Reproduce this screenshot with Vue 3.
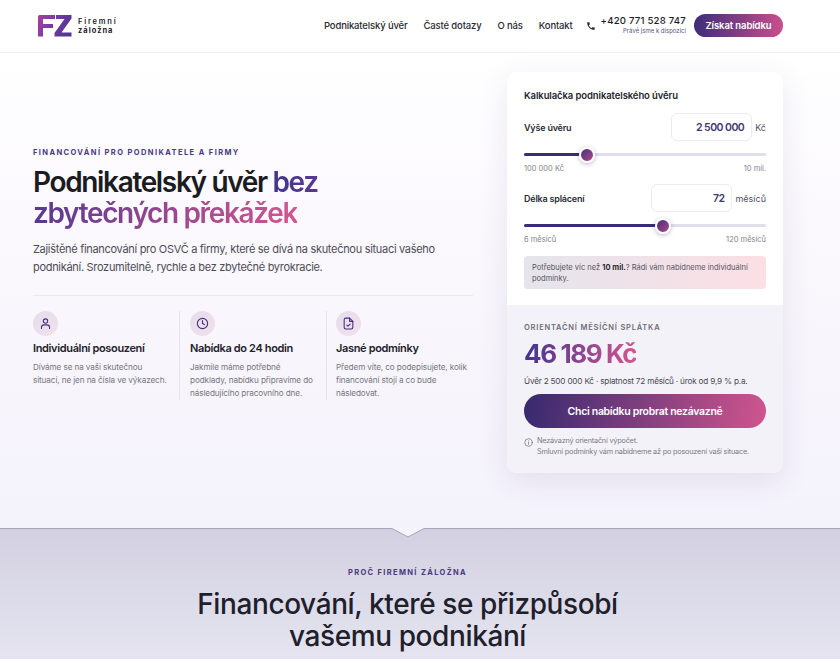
<script setup>
import { computed } from 'vue'

const amount = 2500000
const months = 72
const payment = 46189

const amountRatio = computed(() => (amount - 100000) / (10000000 - 100000))
const monthsRatio = computed(() => (months - 6) / (120 - 6))

// same thumb travel as a native range input with a 16px thumb
function thumbPosition(ratio) {
  return `calc(8px + (100% - 16px) * ${ratio})`
}

function formatNumber(value) {
  return String(value).replace(/\B(?=(\d{3})+(?!\d))/g, ' ')
}

const navLinks = ['Podnikatelský úvěr', 'Časté dotazy', 'O nás', 'Kontakt']

const features = [
  {
    icon: 'user',
    title: 'Individuální posouzení',
    text: 'Díváme se na vaši skutečnou situaci, ne jen na čísla ve výkazech.',
  },
  {
    icon: 'clock',
    title: 'Nabídka do 24 hodin',
    text: 'Jakmile máme potřebné podklady, nabídku připravíme do následujícího pracovního dne.',
  },
  {
    icon: 'file',
    title: 'Jasné podmínky',
    text: 'Předem víte, co podepisujete, kolik financování stojí a co bude následovat.',
  },
]
</script>

<template>
  <div class="page">
    <header class="header">
      <div class="header-inner">
        <a class="logo">
          <svg class="logo-mark" width="34" height="22" viewBox="0 0 34 22">
            <defs>
              <linearGradient id="logoGrad" x1="0" y1="0" x2="1" y2="0.300">
                <stop offset="0" stop-color="#a8409e" />
                <stop offset="0.500" stop-color="#7a3aa0" />
                <stop offset="1" stop-color="#54359a" />
              </linearGradient>
            </defs>
            <path
              fill="url(#logoGrad)"
              d="M0 1.500Q0 0 1.500 0H17V4H5V9H15V13H5V21.500H0ZM18 0H33.500V3.500L23.500 17.500H33.500V21.500H16.500V18L26.500 4H18Z"
            />
          </svg>
          <span class="logo-text">
            <span class="logo-top">Firemní</span>
            <span class="logo-bottom">záložna</span>
          </span>
        </a>
        <nav class="nav">
          <a v-for="link in navLinks" :key="link">{{ link }}</a>
        </nav>
        <div class="phone">
          <svg width="10" height="10" viewBox="0 0 24 24" fill="#26262e">
            <path d="M6.600 10.800c1.400 2.800 3.800 5.100 6.600 6.600l2.200-2.200c.3-.3.700-.4 1-.2 1.100.4 2.300.6 3.600.6.600 0 1 .4 1 1V20c0 .6-.4 1-1 1C10.600 21 3 13.400 3 4c0-.6.400-1 1-1h3.500c.6 0 1 .4 1 1 0 1.300.2 2.500.6 3.600.1.300 0 .7-.2 1z" />
          </svg>
          <div class="phone-text">
            <span class="phone-number">+420 771 528 747</span>
            <span class="phone-note">Právě jsme k dispozici</span>
          </div>
        </div>
        <button class="header-cta" type="button">Získat nabídku</button>
      </div>
    </header>

    <section class="hero">
      <div class="hero-inner">
        <div class="hero-left">
          <p class="eyebrow">Financování pro podnikatele a firmy</p>
          <h1 class="hero-title">
            Podnikatelský úvěr <span class="gradient-text">bez<br />zbytečných překážek</span>
          </h1>
          <p class="hero-lead">
            Zajištěné financování pro OSVČ a firmy, které se dívá na skutečnou situaci vašeho
            podnikání. Srozumitelně, rychle a bez zbytečné byrokracie.
          </p>
          <div class="features">
            <div v-for="feature in features" :key="feature.title" class="feature">
              <span class="feature-icon">
                <svg
                  width="13"
                  height="13"
                  viewBox="0 0 24 24"
                  fill="none"
                  stroke="#4a2f7f"
                  stroke-width="2"
                  stroke-linecap="round"
                  stroke-linejoin="round"
                >
                  <template v-if="feature.icon === 'user'">
                    <circle cx="12" cy="7.500" r="4" />
                    <path d="M4.500 21v-1.500a5 5 0 0 1 5-5h5a5 5 0 0 1 5 5V21" />
                  </template>
                  <template v-else-if="feature.icon === 'clock'">
                    <circle cx="12" cy="12" r="9.500" />
                    <path d="M12 6.500V12l3.500 2" />
                  </template>
                  <template v-else>
                    <path d="M14 2H7a3 3 0 0 0-3 3v14a3 3 0 0 0 3 3h10a3 3 0 0 0 3-3V8z" />
                    <path d="M14 2v6h6" />
                    <path d="M9 15l2 2 4-4" />
                  </template>
                </svg>
              </span>
              <h3 class="feature-title">{{ feature.title }}</h3>
              <p class="feature-text">{{ feature.text }}</p>
            </div>
          </div>
        </div>

        <aside class="card">
          <div class="card-top">
            <h2 class="card-title">Kalkulačka podnikatelského úvěru</h2>

            <div class="field-row">
              <label class="field-label">Výše úvěru</label>
              <div class="field-value">
                <span class="value-box">{{ formatNumber(amount) }}</span>
                <span class="unit">Kč</span>
              </div>
            </div>
            <div class="slider">
              <div class="slider-fill" :style="{ width: thumbPosition(amountRatio) }"></div>
              <span class="slider-thumb" :style="{ left: thumbPosition(amountRatio) }"></span>
            </div>
            <div class="slider-labels">
              <span>100 000 Kč</span>
              <span>10 mil.</span>
            </div>

            <div class="field-row field-row-second">
              <label class="field-label">Délka splácení</label>
              <div class="field-value">
                <span class="value-box">{{ months }}</span>
                <span class="unit">měsíců</span>
              </div>
            </div>
            <div class="slider">
              <div class="slider-fill" :style="{ width: thumbPosition(monthsRatio) }"></div>
              <span class="slider-thumb" :style="{ left: thumbPosition(monthsRatio) }"></span>
            </div>
            <div class="slider-labels">
              <span>6 měsíců</span>
              <span>120 měsíců</span>
            </div>

            <p class="notice">
              Potřebujete víc než <strong>10 mil.</strong>? Rádi vám nabídneme individuální
              podmínky.
            </p>
          </div>

          <div class="card-bottom">
            <p class="result-label">Orientační měsíční splátka</p>
            <p class="result-value"><span>{{ formatNumber(payment) }} Kč</span></p>
            <p class="result-summary">
              Úvěr {{ formatNumber(amount) }} Kč · splatnost {{ months }} měsíců · úrok od 9,9 % p.a.
            </p>
            <button class="card-cta" type="button">Chci nabídku probrat nezávazně</button>
            <div class="disclaimer">
              <svg
                width="9"
                height="9"
                viewBox="0 0 24 24"
                fill="none"
                stroke="#77757f"
                stroke-width="2"
                stroke-linecap="round"
              >
                <circle cx="12" cy="12" r="10" />
                <path d="M12 11v6M12 7.500v.1" />
              </svg>
              <p>
                Nezávazný orientační výpočet.<br />
                Smluvní podmínky vám nabídneme až po posouzení vaší situace.
              </p>
            </div>
          </div>
        </aside>
      </div>
    </section>

    <section class="why">
      <svg class="why-notch" width="34" height="10" viewBox="0 0 34 10">
        <path d="M0 0L17 9L34 0Z" fill="#f5f3fb" />
        <path d="M0 0L17 9L34 0" fill="none" stroke="#a6a3bd" />
      </svg>
      <p class="why-eyebrow">Proč Firemní záložna</p>
      <h2 class="why-title">Financování, které se přizpůsobí<br />vašemu podnikání</h2>
    </section>
  </div>
</template>

<style>
html,
body {
  margin: 0;
  background: #fff;
}
</style>

<style scoped>
.page {
  height: 659px;
  overflow: hidden;
  font-family: Inter, 'Noto Sans', sans-serif;
  color: #1d1d26;
}

p,
h1,
h2,
h3 {
  margin: 0;
}

.header {
  height: 52px;
  border-bottom: 1px solid #f0eff3;
  background: #fff;
}

.header-inner {
  width: 750px;
  height: 51px;
  margin-left: 33px;
  display: flex;
  align-items: center;
}

.logo {
  display: flex;
  align-items: center;
  gap: 6px;
  margin-left: 5px;
}

.logo-text {
  display: flex;
  flex-direction: column;
  font-size: 7.500px;
  font-weight: 600;
  line-height: 9px;
  color: #23232b;
}

.logo-top {
  letter-spacing: 1.800px;
}

.logo-bottom {
  letter-spacing: 1px;
  font-weight: 700;
}

.nav {
  display: flex;
  gap: 16px;
  margin-left: auto;
  font-size: 9.500px;
  font-weight: 500;
  letter-spacing: -0.150px;
  color: #2a2a33;
}

.phone {
  display: flex;
  align-items: center;
  gap: 5px;
  margin-left: 13px;
}

.phone-text {
  display: flex;
  flex-direction: column;
  align-items: flex-end;
  margin-top: -3px;
}

.phone-number {
  font-size: 9.600px;
  font-weight: 500;
  line-height: 13px;
  letter-spacing: 0.200px;
}

.phone-note {
  font-size: 6px;
  line-height: 7px;
  color: #5c5580;
}

.header-cta {
  width: 89px;
  height: 23px;
  margin-left: 8px;
  padding: 0;
  border: none;
  border-radius: 12px;
  background: linear-gradient(90deg, #3d2d78, #c94f8d);
  color: #fff;
  font-family: inherit;
  font-size: 9.500px;
  font-weight: 600;
  letter-spacing: -0.100px;
}

.hero {
  height: 476px;
  background: linear-gradient(180deg, #fff 0%, #faf7fd 45%, #f4f2fb 100%);
  border-bottom: 1px solid #a6a3bd;
  box-sizing: border-box;
}

.hero-inner {
  width: 750px;
  margin-left: 33px;
  padding-top: 19px;
  display: flex;
  justify-content: space-between;
  align-items: flex-start;
}

.hero-left {
  width: 440px;
  padding-top: 76px;
}

.eyebrow {
  font-size: 7.500px;
  font-weight: 700;
  line-height: 10px;
  letter-spacing: 1.400px;
  text-transform: uppercase;
  color: #4b3a80;
}

.hero-title {
  margin-top: 9px;
  font-size: 28px;
  font-weight: 600;
  line-height: 31px;
  letter-spacing: -1.350px;
  color: #1b1b22;
}

.gradient-text {
  background: linear-gradient(90deg, #43348f, #d3568f);
  -webkit-background-clip: text;
  background-clip: text;
  color: transparent;
}

.hero-lead {
  margin-top: 11px;
  font-size: 11px;
  line-height: 18px;
  letter-spacing: -0.300px;
  color: #4d4c56;
}

.features {
  display: flex;
  margin-top: 19px;
  padding-top: 15px;
  border-top: 1px solid #ebe8f0;
}

.feature {
  flex: 1 1 0;
  box-sizing: border-box;
  padding: 0 10px;
  border-left: 1px solid #e7e4ec;
}

.feature:first-child {
  flex: 0 0 146px;
  padding-left: 0;
  border-left: none;
}

.feature:nth-child(2) {
  flex: 0 0 147px;
}

.feature:last-child {
  padding: 0 0 0 9px;
}

.feature-icon {
  width: 25px;
  height: 25px;
  display: flex;
  align-items: center;
  justify-content: center;
  border-radius: 50%;
  background: linear-gradient(135deg, #e4dfec, #f1dfeb);
}

.feature-title {
  margin-top: 5px;
  font-size: 11px;
  font-weight: 600;
  line-height: 15px;
  letter-spacing: -0.350px;
  color: #22222b;
}

.feature-text {
  margin-top: 5px;
  font-size: 8.200px;
  line-height: 13px;
  letter-spacing: -0.120px;
  color: #77757f;
}

.card {
  width: 276px;
  height: 401px;
  border-radius: 10px;
  overflow: hidden;
  background: #fff;
  box-shadow: 0 8px 30px rgba(60, 50, 110, 0.1);
}

.card-top {
  height: 233px;
  box-sizing: border-box;
  padding: 17px 17px 0;
}

.card-title {
  font-size: 9.500px;
  font-weight: 600;
  line-height: 13px;
  letter-spacing: -0.100px;
  color: #25252e;
}

.field-row {
  display: flex;
  align-items: center;
  justify-content: space-between;
  margin-top: 11px;
}

.field-row-second {
  margin-top: 10px;
}

.field-label {
  font-size: 9px;
  font-weight: 600;
  letter-spacing: -0.200px;
  color: #2b2b34;
}

.field-value {
  display: flex;
  align-items: center;
  gap: 3px;
}

.value-box {
  width: 81px;
  height: 28px;
  display: flex;
  align-items: center;
  justify-content: flex-end;
  box-sizing: border-box;
  padding-right: 7px;
  border: 1px solid #edecf1;
  border-radius: 6px;
  background: #fff;
  font-size: 10.500px;
  font-weight: 600;
  letter-spacing: -0.550px;
  color: #42386f;
}

.unit {
  font-size: 9px;
  color: #55535e;
}

.slider {
  position: relative;
  height: 3px;
  margin-top: 12px;
  border-radius: 2px;
  background: #e0deea;
}

.slider-fill {
  height: 100%;
  border-radius: 2px;
  background: #3a2c75;
}

.slider-thumb {
  position: absolute;
  top: 50%;
  width: 12px;
  height: 12px;
  border: 2px solid #fff;
  border-radius: 50%;
  background: linear-gradient(135deg, #44307d, #b04888);
  transform: translate(-50%, -50%);
  box-shadow: 0 1px 4px rgba(50, 40, 100, 0.35);
}

.slider-labels {
  display: flex;
  justify-content: space-between;
  margin-top: 8px;
  font-size: 7.500px;
  line-height: 10px;
  color: #85838d;
}

.notice {
  margin-top: 11px;
  padding: 6px 8px 5px;
  border-radius: 4px;
  background: linear-gradient(90deg, #e5e4ec, #fbdfe4);
  font-size: 7.500px;
  line-height: 11px;
  color: #55535f;
}

.notice strong {
  font-weight: 700;
  color: #2b2b34;
}

.card-bottom {
  height: 168px;
  box-sizing: border-box;
  padding: 18px 17px 0;
  background: #f4f2f9;
}

.result-label {
  font-size: 7.500px;
  font-weight: 600;
  line-height: 10px;
  letter-spacing: 0.800px;
  text-transform: uppercase;
  color: #6d6b78;
}

.result-value {
  margin-top: 6px;
  font-size: 26px;
  font-weight: 700;
  line-height: 30px;
  letter-spacing: -1.400px;
}

.result-value span {
  display: inline-block;
  background: linear-gradient(90deg, #43348f, #d3568f);
  -webkit-background-clip: text;
  background-clip: text;
  color: transparent;
}

.result-summary {
  margin-top: 6px;
  font-size: 8.200px;
  line-height: 12px;
  letter-spacing: -0.200px;
  color: #4a4953;
  white-space: nowrap;
}

.card-cta {
  width: 100%;
  height: 34px;
  margin-top: 7px;
  padding: 0;
  border: none;
  border-radius: 17px;
  background: linear-gradient(100deg, #36296f, #d0558e);
  color: #fff;
  font-family: inherit;
  font-size: 10.500px;
  font-weight: 600;
  letter-spacing: -0.300px;
}

.disclaimer {
  display: flex;
  gap: 4px;
  margin-top: 7px;
  align-items: flex-start;
}

.disclaimer svg {
  flex: none;
  margin-top: 3px;
}

.disclaimer p {
  font-size: 7.300px;
  line-height: 11px;
  letter-spacing: -0.200px;
  color: #7b7985;
  white-space: nowrap;
}

.why {
  position: relative;
  width: 840px;
  height: 131px;
  padding: 39px 25px 0 0;
  box-sizing: border-box;
  text-align: center;
  background: linear-gradient(180deg, #d3d1e1 0%, #e5e4f0 100%);
}

.why-notch {
  position: absolute;
  top: -1px;
  left: 391px;
}

.why-eyebrow {
  font-size: 7.500px;
  font-weight: 700;
  line-height: 10px;
  letter-spacing: 1.350px;
  text-transform: uppercase;
  color: #4b3a80;
}

.why-title {
  margin-top: 10px;
  font-size: 28px;
  font-weight: 500;
  line-height: 32px;
  letter-spacing: -0.400px;
  color: #20202b;
}
</style>
